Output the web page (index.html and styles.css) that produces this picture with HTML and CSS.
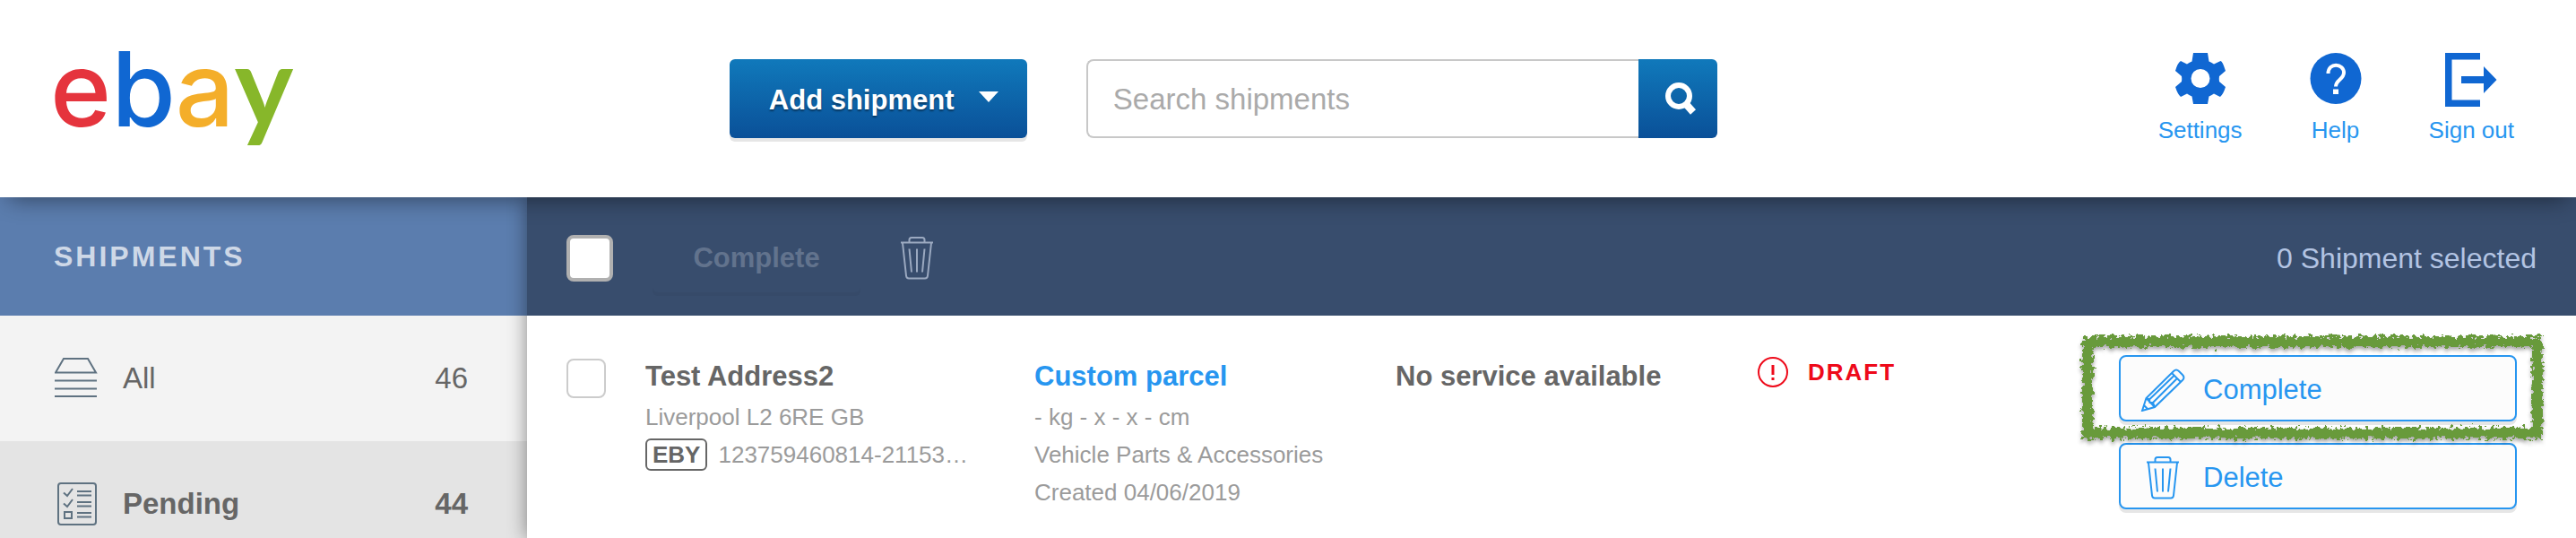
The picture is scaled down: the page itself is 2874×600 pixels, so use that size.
FILE: index.html
```html
<!DOCTYPE html>
<html lang="en">
<head>
    <meta charset="UTF-8">
    <meta name="viewport" content="width=device-width, initial-scale=1.0">
    <title>Shipments</title>
    <link rel="stylesheet" href="styles.css">
</head>
<body>
    <svg class="sprite" aria-hidden="true">
        <symbol id="icon-trash" viewBox="0 0 38 48">
            <path d="M1 6.500H37M3 7L7 43.500Q7.300 46.500 10 46.500H28Q30.700 46.500 31 43.500L35 7M10.500 6V3.500Q10.500 1 13 1H25Q27.500 1 27.500 3.500V6M10.500 13.500L13 39.500M19 13.500V39.500M27.500 13.500L25 39.500"></path>
        </symbol>
    </svg>

    <header class="header">
        <a class="logo" href="#" aria-label="ebay"><span class="logo-e">e</span><span class="logo-b">b</span><span class="logo-a">a</span><span class="logo-y">y</span></a>

        <div class="header-tools">
            <button class="add-btn" type="button">
                Add shipment
                <svg class="caret" width="22" height="12" viewBox="0 0 22 12"><path d="M0 0h22L11 12z"></path></svg>
            </button>
            <form class="search">
                <input type="text" class="search-input" placeholder="Search shipments" aria-label="Search shipments">
                <button class="search-btn" type="button" aria-label="Search">
                    <svg width="34" height="37" viewBox="0 0 34 37" fill="none" stroke="#fff">
                        <circle cx="15" cy="15" r="12" stroke-width="6"></circle>
                        <path d="M23 24L31 33" stroke-width="8"></path>
                    </svg>
                </button>
            </form>
        </div>

        <nav class="header-nav">
            <a href="#">
                <svg width="58" height="60" viewBox="0 0 58 60">
                    <path fill="#1067d2" fill-rule="evenodd" d="M21 0H37L38.500 9.500Q41 10.500 44 12.500L51.500 9Q53.500 9 57 20L50 26Q49.500 29 50 32L57 38Q54.500 46 51 49L44 45.500Q41 47.500 38.500 48.500L37 57H21L19.500 48.500Q17 47.500 14 45.500L7 49Q3.500 46 1 38L8 32Q8.500 29 8 26L1 20Q3.500 11 7 9L14 12.500Q17 10.500 19.500 9.500ZM29 18A10.500 10.500 0 1 0 29 39A10.500 10.500 0 1 0 29 18Z"></path>
                </svg>
                Settings
            </a>
            <a href="#">
                <svg width="58" height="60" viewBox="0 0 58 60" fill="none">
                    <circle cx="29" cy="28.500" r="28.500" fill="#1067d2"></circle>
                    <path d="M20.500 23C20.500 10 38 11.500 38 22C38 29.500 29 30 29 37.500" stroke="#fff" stroke-width="4"></path>
                    <path d="M26 40.500h6v5.500h-6z" fill="#fff"></path>
                </svg>
                Help
            </a>
            <a href="#">
                <svg width="58" height="60" viewBox="0 0 58 60">
                    <path fill="#1067d2" d="M0 0H39V7.500H7.500V52.500H39V60H0ZM18 26H43V15L57.500 30L43 45V34H18Z"></path>
                </svg>
                Sign out
            </a>
        </nav>
    </header>

    <div class="layout">
        <aside class="sidebar">
            <h2 class="sidebar-title">SHIPMENTS</h2>
            <a class="sidebar-item" href="#">
                <svg width="48" height="48" viewBox="0 0 48 48" fill="none" stroke="#5f7281" stroke-width="2">
                    <path d="M10 2H37L46 17.500H1ZM0 26.500H47M0 35.500H47M0 44H47"></path>
                </svg>
                <span class="name">All</span>
                <span class="count">46</span>
            </a>
            <a class="sidebar-item active" href="#">
                <svg width="48" height="48" viewBox="0 0 48 48" fill="none" stroke="#5f7281" stroke-width="2">
                    <rect x="4" y="1" width="42" height="46" rx="3"></rect>
                    <path d="M10 11.500L14 15L20 7M10 23.500L14 27L20 19M25 10H41M25 14.500H41M25 22H41M25 26.500H41M25 34H41M25 38.500H41"></path>
                    <rect x="11" y="33" width="8" height="7"></rect>
                </svg>
                <span class="name">Pending</span>
                <span class="count">44</span>
            </a>
        </aside>

        <main class="main">
            <div class="toolbar">
                <input type="checkbox" class="check check-all" aria-label="Select all shipments">
                <button class="bulk-btn" type="button" disabled>Complete</button>
                <button class="trash-btn" type="button" aria-label="Delete selected">
                    <svg class="icon" width="38" height="48"><use href="#icon-trash"></use></svg>
                </button>
                <span class="selected">0 Shipment selected</span>
            </div>

            <section class="shipment">
                <input type="checkbox" class="check" aria-label="Select Test Address2">
                <div class="address">
                    <h3>Test Address2</h3>
                    <p>Liverpool L2 6RE GB</p>
                    <p class="order"><span class="tag">EBY</span>123759460814-21153…</p>
                </div>
                <div class="parcel">
                    <h3><a href="#">Custom parcel</a></h3>
                    <p>- kg - x - x - cm</p>
                    <p>Vehicle Parts &amp; Accessories</p>
                    <p>Created 04/06/2019</p>
                </div>
                <div class="service">
                    <h3>No service available</h3>
                </div>
                <div class="status">
                    <svg width="34" height="34" viewBox="0 0 34 34" fill="none" stroke="#ee0a1a">
                        <circle cx="17" cy="17" r="16" stroke-width="2"></circle>
                        <path d="M17 9V20M17 23V26" stroke-width="3"></path>
                    </svg>
                    DRAFT
                </div>
                <div class="actions">
                    <div class="highlighted">
                        <button class="action-btn" type="button">
                            <svg class="icon" width="50" height="48" viewBox="0 0 50 48">
                                <path d="M2 47L6.500 33L37 3Q40 0 43 3L47 7Q50 10 47 13L16 43ZM6.500 33L16 43M35 5L45 15M10 34.500L38 7.500M14 38L41 11M6.500 33L10 34.500L10.500 38L14 38L16 43M4 41L8 45"></path>
                            </svg>
                            Complete
                        </button>
                        <svg class="marker" aria-hidden="true">
                            <defs>
                                <filter id="chalk" x="-5%" y="-20%" width="110%" height="150%">
                                    <feTurbulence type="fractalNoise" baseFrequency="0.22" numOctaves="3" seed="4" result="noise"></feTurbulence>
                                    <feDisplacementMap in="SourceGraphic" in2="noise" scale="13" xChannelSelector="R" yChannelSelector="G" result="rough"></feDisplacementMap>
                                    <feDropShadow in="rough" dx="0" dy="3" stdDeviation="2" flood-color="#000" flood-opacity="0.35"></feDropShadow>
                                </filter>
                            </defs>
                            <rect x="0" y="0" width="100%" height="100%" filter="url(#chalk)"></rect>
                        </svg>
                    </div>
                    <button class="action-btn" type="button">
                        <svg class="icon" width="50" height="48"><use href="#icon-trash"></use></svg>
                        Delete
                    </button>
                </div>
            </section>
        </main>
    </div>
</body>
</html>
```

FILE: styles.css
```css
* {
    margin: 0;
    padding: 0;
    box-sizing: border-box;
}

body {
    font-family: 'Liberation Sans', Arial, sans-serif;
    font-size: 26px;
    color: #666;
    background: #fff;
    height: 100vh;
    display: flex;
    flex-direction: column;
    overflow: hidden;
}

a {
    color: #2796f0;
    text-decoration: none;
}

button {
    font-family: inherit;
    font-size: 31px;
    border: none;
    cursor: pointer;
}

svg {
    display: block;
    flex: none;
}

.sprite {
    position: absolute;
    width: 0;
    height: 0;
}

.icon {
    fill: none;
    stroke: currentColor;
    stroke-width: 2;
}

/* Header */
.header {
    position: relative;
    z-index: 2;
    display: flex;
    justify-content: space-between;
    align-items: center;
    flex: none;
    height: 220px;
    padding: 0 69px 0 56px;
    background: #fff;
    box-shadow: 0 12px 24px -10px rgba(0, 0, 0, 0.45);
}

.logo {
    display: flex;
    align-items: baseline;
    width: 266px;
    padding-bottom: 28px;
    font-family: Inter, 'Liberation Sans', sans-serif;
    font-size: 116px;
    font-weight: 500;
    line-height: 140px;
}

.logo-e {
    color: #e5343d;
}

.logo-b {
    color: #1067d2;
}

.logo-a {
    color: #f4ae2a;
}

.logo-y {
    font-family: Lato, 'Liberation Sans', sans-serif;
    font-weight: bold;
    font-size: 124px;
    color: #87b72a;
}

.header-tools {
    display: flex;
    gap: 66px;
}

.add-btn {
    display: flex;
    align-items: center;
    justify-content: space-between;
    width: 332px;
    height: 88px;
    padding: 4px 32px 0 44px;
    border-radius: 6px;
    color: #fff;
    font-weight: bold;
    text-shadow: 0 2px 2px rgba(0, 0, 0, 0.4);
    background: linear-gradient(#1079bb, #0a5098);
    box-shadow: 0 4px 0 #e6e6e6;
}

.caret {
    fill: #fff;
    margin-bottom: 8px;
}

.search {
    display: flex;
}

.search-input {
    width: 616px;
    height: 88px;
    padding: 2px 28px 0;
    border: 2px solid #c8c8c8;
    border-right: none;
    border-radius: 8px 0 0 8px;
    font-family: inherit;
    font-size: 33px;
    color: #666;
}

.search-input::placeholder {
    color: #aaa;
}

.search-btn {
    display: flex;
    align-items: center;
    justify-content: center;
    width: 88px;
    height: 88px;
    padding-left: 6px;
    border-radius: 0 6px 6px 0;
    background: linear-gradient(#1079bb, #0a5098);
}

.header-nav {
    display: flex;
    gap: 75px;
    padding-bottom: 2px;
}

.header-nav a {
    display: flex;
    flex-direction: column;
    align-items: center;
    gap: 12px;
    line-height: 28px;
}

/* Layout */
.layout {
    display: flex;
    flex: 1;
    min-height: 0;
}

.sidebar {
    width: 588px;
    flex: none;
    background: #f3f3f3;
    overflow: hidden;
}

.sidebar-title {
    display: flex;
    align-items: center;
    height: 132px;
    padding: 0 60px;
    font-size: 32px;
    letter-spacing: 3px;
    color: #ced8e7;
    background: #5b7dae;
}

.sidebar-item {
    display: flex;
    align-items: center;
    gap: 28px;
    height: 140px;
    padding: 0 66px 0 61px;
    font-size: 33px;
    color: #666;
}

.sidebar-item.active {
    font-weight: bold;
    background: #e4e4e4;
}

.count {
    margin-left: auto;
}

.main {
    position: relative;
    z-index: 1;
    flex: 1;
    background: #fff;
    box-shadow: 0 0 20px rgba(0, 0, 0, 0.45);
}

.toolbar {
    display: flex;
    align-items: center;
    height: 132px;
    padding: 4px 44px 0;
    background: #384d6d;
}

.check {
    appearance: none;
    width: 44px;
    height: 44px;
    border: 2px solid #ccc;
    border-radius: 8px;
    background: #fff;
}

.check-all {
    width: 52px;
    height: 52px;
    border: 4px solid #b0b0b0;
}

.bulk-btn {
    width: 232px;
    height: 76px;
    margin-left: 44px;
    border-radius: 6px;
    font-weight: bold;
    color: #62738d;
    background: none;
    box-shadow: 0 4px 0 #364a69;
}

.trash-btn {
    margin-left: 44px;
    color: #9ba9c0;
    background: none;
}

.selected {
    margin-left: auto;
    font-size: 32px;
    color: #b3c4e3;
}

/* Shipment row */
.shipment {
    display: grid;
    grid-template-columns: 88px 434fr 403fr 404fr 403fr 444fr;
    padding: 44px 66px 0 44px;
}

.shipment > .check {
    margin-top: 4px;
}

.shipment h3 {
    font-size: 31px;
    line-height: 48px;
}

.shipment p {
    line-height: 42px;
    color: #9b9b9b;
}

.order {
    display: flex;
    align-items: center;
    gap: 12px;
}

.tag {
    padding: 0 6px;
    border: 2px solid #666;
    border-radius: 6px;
    font-weight: bold;
    line-height: 32px;
    color: #666;
}

.status {
    display: flex;
    align-items: center;
    align-self: start;
    gap: 22px;
    height: 38px;
    font-weight: bold;
    letter-spacing: 2px;
    color: #ee0a1a;
}

.actions {
    display: flex;
    flex-direction: column;
    gap: 24px;
}

.highlighted {
    position: relative;
}

.action-btn {
    display: flex;
    align-items: center;
    gap: 20px;
    width: 100%;
    height: 74px;
    padding: 4px 22px 0;
    border: 2px solid #2796f0;
    border-radius: 8px;
    color: #2796f0;
    background: #fcfcfc;
    box-shadow: 0 4px 0 #e6e6e6;
}

/* hand drawn frame around the first action */
.marker {
    position: absolute;
    top: -15px;
    left: -35px;
    width: calc(100% + 58px);
    height: 102px;
    overflow: visible;
    fill: none;
    stroke: #689a3a;
    stroke-width: 12;
    pointer-events: none;
}
```
